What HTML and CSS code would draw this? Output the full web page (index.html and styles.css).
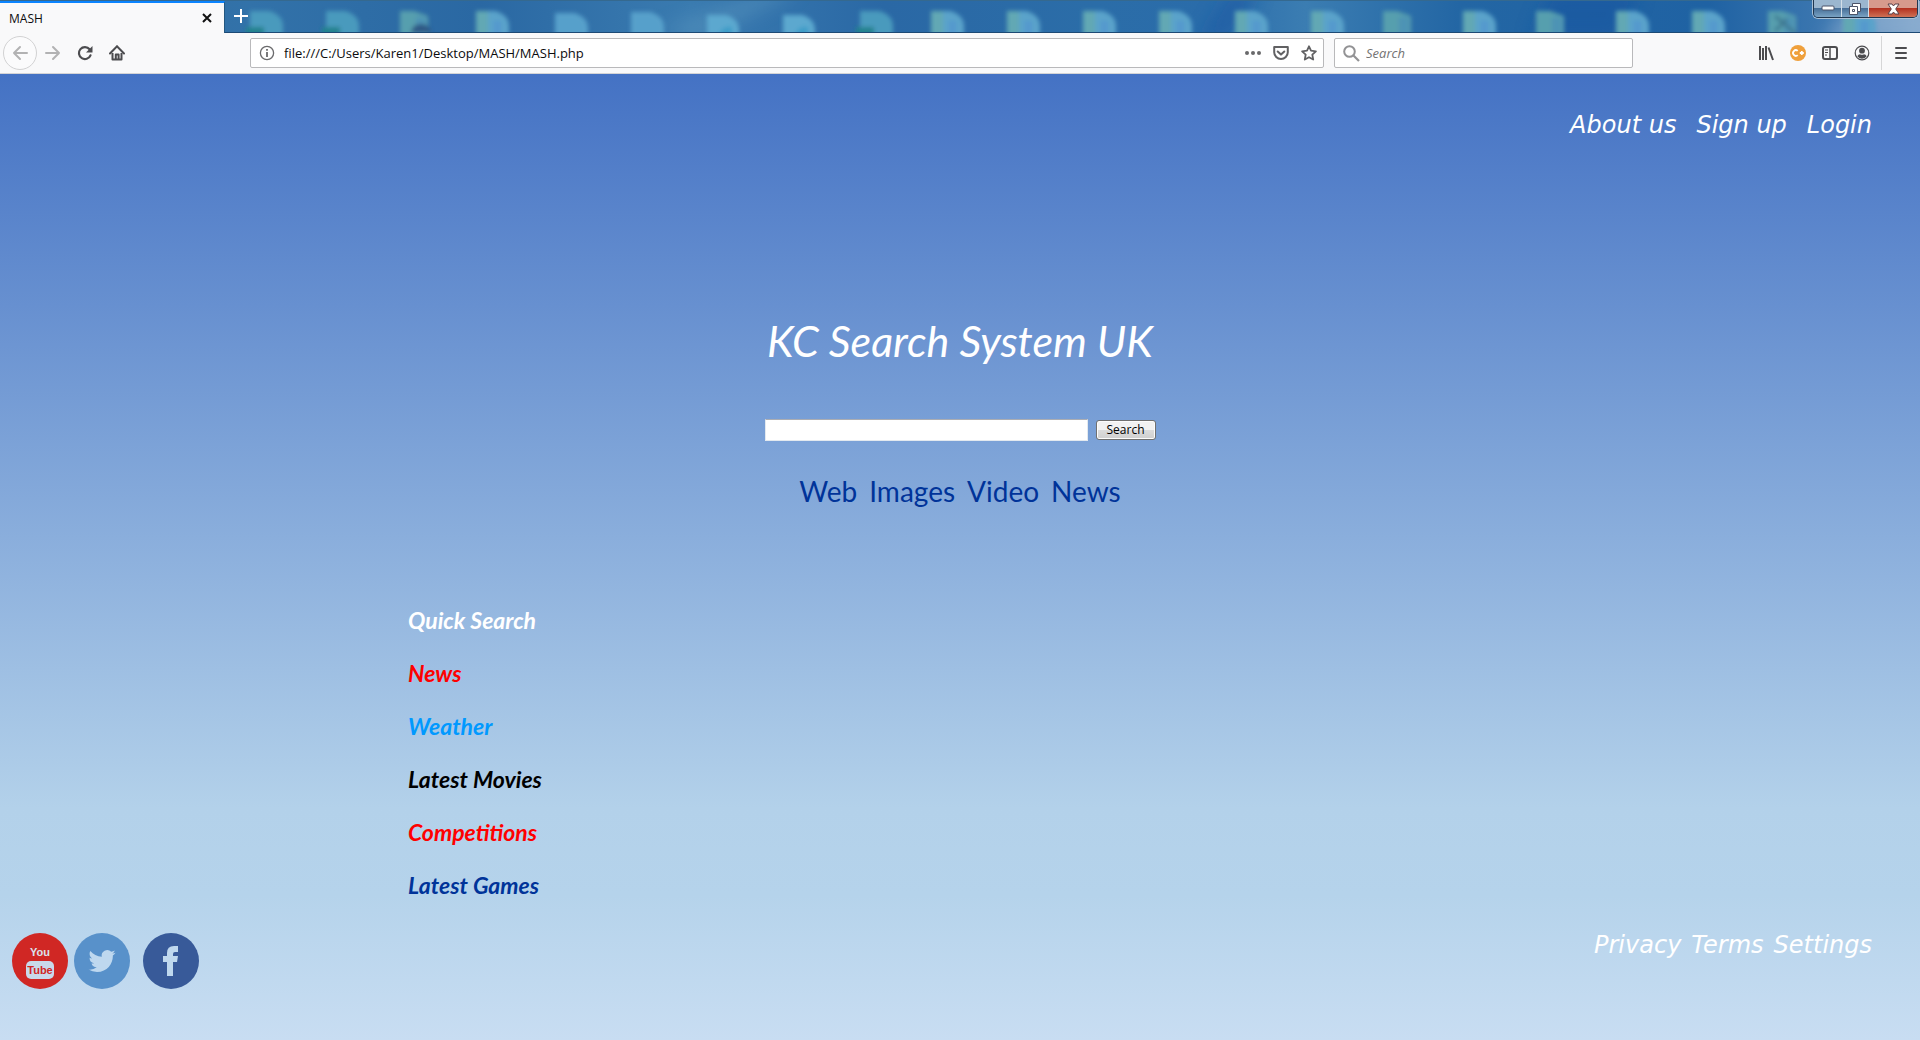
FILE: index.html
```html
<!DOCTYPE html>
<html lang="en">
<head>
<meta charset="utf-8">
<title>MASH</title>
<link rel="stylesheet" href="styles.css">
</head>
<body>
<header class="browser">
  <div class="tabstrip">
    <svg class="desktop" width="1920" height="33" viewBox="0 0 1920 33" preserveAspectRatio="xMinYMin slice" aria-hidden="true">
      <defs>
        <linearGradient id="sky" x1="0" x2="1" y1="0" y2="0">
          <stop offset="0" stop-color="#31699f"/><stop offset=".13" stop-color="#3272a9"/><stop offset=".25" stop-color="#2a68a3"/><stop offset=".36" stop-color="#3a7bb0"/><stop offset=".46" stop-color="#2a68a5"/><stop offset=".57" stop-color="#2b6da8"/><stop offset=".63" stop-color="#2a6caa"/><stop offset=".68" stop-color="#3b7db2"/><stop offset=".76" stop-color="#2366a4"/><stop offset=".89" stop-color="#1f62a3"/><stop offset=".95" stop-color="#3c77b0"/><stop offset="1" stop-color="#7ba2c9"/>
        </linearGradient>
        <filter id="soft" x="-20%" y="-20%" width="140%" height="140%"><feGaussianBlur stdDeviation="2"/></filter>
        <filter id="haze" x="-50%" y="-50%" width="200%" height="200%"><feGaussianBlur stdDeviation="9"/></filter>
        <g id="file"><path d="M0 0h19q14 4 14 15v20H0z" fill="#5aa3ca"/><path d="M0 0h12v35H0z" fill="#62a8b4"/><path d="M18 10h7v24h-7z" fill="#5598ce"/></g>
        <g id="sheet"><path d="M0 0h19q14 4 14 15v20H0z" fill="#57a0cb"/></g>
        <g id="excel"><path d="M0 0h19q14 4 14 15v20H0z" fill="#4a9abd"/><path d="M-4 16h18v18H-4z" fill="#23828e"/></g>
        <g id="folder"><path d="M0 0h14l14 5v30H0z" fill="#579fae"/><path d="M16 6h10v28H16z" fill="#4d93b5"/></g>
        <g id="web"><path d="M0 0h19q13 4 13 15v20H0z" fill="#5ba8cf"/><path d="M10 28q2-18 15-16v18z" fill="#3c9cc8"/></g>
      </defs>
      <rect width="1920" height="33" fill="url(#sky)"/>
      <g filter="url(#haze)" opacity=".5"><path d="M660 30L770-10h30L700 40z" fill="#5b98c0"/><path d="M1200 40l30-50h30l-30 50z" fill="#1552a0"/><path d="M1530 40l20-50h90l-20 50z" fill="#1552a0"/><path d="M1820 40L1870-5h60v50z" fill="#9ab7d6"/></g>
      <g filter="url(#soft)">
        <use href="#excel" x="250" y="11"/><use href="#excel" x="326" y="11"/>
        <use href="#folder" x="400" y="11"/><path d="M411 33q1-9 10-9t10 9z" fill="#2f5885"/>
        <use href="#file" x="476" y="11"/><use href="#sheet" x="555" y="13"/><use href="#sheet" x="631" y="12"/>
        <use href="#web" x="707" y="15"/><use href="#web" x="783" y="15"/><use href="#excel" x="860" y="11"/>
        <use href="#file" x="931" y="11"/><use href="#file" x="1007" y="11"/><use href="#file" x="1083" y="11"/><use href="#file" x="1159" y="11"/><use href="#file" x="1235" y="11"/><use href="#file" x="1311" y="11"/>
        <use href="#folder" x="1383" y="11"/><use href="#file" x="1463" y="11"/><use href="#folder" x="1536" y="11"/><use href="#file" x="1616" y="11"/><use href="#file" x="1692" y="11"/><use href="#folder" x="1768" y="11"/><path d="M1775 16l20 17M1775 31l12-12" stroke="#3d7690" stroke-width="3"/><use href="#file" x="1843" y="11"/>
      </g>
      <path d="M0 .5h1920" stroke="#35698f"/><path d="M0 32.5h1920" stroke="#1d4a75"/>
    </svg>
    <div class="tab"><span>MASH</span>
      <button class="plain" aria-label="Close tab"><svg width="10" height="10" viewBox="0 0 10 10"><path d="M1 1l8 8M9 1L1 9" stroke="#111" stroke-width="2"/></svg></button>
    </div>
    <button class="plain newtab" aria-label="New tab"><svg width="14" height="14" viewBox="0 0 14 14"><path d="M7 0v14M0 7h14" stroke="#fff" stroke-width="2"/></svg></button>
    <div class="window-buttons">
      <button class="win" aria-label="Minimize"><svg width="14" height="7" viewBox="0 0 14 7"><rect x="1" y="1" width="12" height="4" rx="1" fill="#fff" stroke="#4b5368"/></svg></button>
      <button class="win win-mid" aria-label="Restore"><svg width="14" height="14" viewBox="0 0 14 14"><path d="M4.500 1.500h8v8h-3v3h-8v-8h3z" fill="#fff" stroke="#4b5368"/><path d="M4.500 4.500h5v5M4.500 7.500h2v2h-2z" fill="none" stroke="#4b5368"/></svg></button>
      <button class="win win-close" aria-label="Close"><svg width="13" height="12" viewBox="0 0 13 12"><path d="M1 1h4l1.500 2L8 1h4L8.700 6l3.300 5H8L6.500 9 5 11H1l3.300-5z" fill="#fff" stroke="#5b4148"/></svg></button>
    </div>
  </div>
  <div class="toolbar">
    <div class="navigation">
      <button class="plain back" aria-label="Back"><svg width="16" height="16" viewBox="0 0 16 16"><path d="M15 8H2M8 2L2 8l6 6" fill="none" stroke="#b2b2b3" stroke-width="2" stroke-linecap="round" stroke-linejoin="round"/></svg></button>
      <button class="plain" aria-label="Forward"><svg width="16" height="16" viewBox="0 0 16 16"><path d="M1 8h13M8 2l6 6-6 6" fill="none" stroke="#b2b2b3" stroke-width="2" stroke-linecap="round" stroke-linejoin="round"/></svg></button>
      <button class="plain" aria-label="Reload"><svg width="16" height="16" viewBox="0 0 16 16"><path d="M12.600 4.300A6 6 0 1 0 13.500 10.300" fill="none" stroke="#4c4c4f" stroke-width="2.200" stroke-linecap="round"/><path d="M15.500 1v6.500H9z" fill="#4c4c4f"/></svg></button>
      <button class="plain" aria-label="Home"><svg width="16" height="16" viewBox="0 0 16 16"><path d="M1 8.500L8 1.300l7 7.200" fill="none" stroke="#4c4c4f" stroke-width="2" stroke-linecap="round"/><path d="M3.500 8v6.500h9V8M6.800 14V9.500h2.800V14" fill="none" stroke="#4c4c4f" stroke-width="2" stroke-linejoin="round"/></svg></button>
    </div>
    <div class="field address">
      <svg width="16" height="16" viewBox="0 0 16 16"><circle cx="8" cy="8" r="6.600" fill="none" stroke="#6a6a6c" stroke-width="1.300"/><path d="M8 7v5M8 4v1.800" stroke="#6a6a6c" stroke-width="1.800"/></svg>
      <input type="text" aria-label="Address" value="file:///C:/Users/Karen1/Desktop/MASH/MASH.php">
      <button class="plain" aria-label="Page actions"><svg width="16" height="16" viewBox="0 0 16 16"><g fill="#69696b"><circle cx="2" cy="8" r="2"/><circle cx="8" cy="8" r="2"/><circle cx="14" cy="8" r="2"/></g></svg></button>
      <button class="plain" aria-label="Save to Pocket"><svg width="16" height="16" viewBox="0 0 16 16"><path d="M1.200 2h13.600v5.200a6.800 6.800 0 0 1-13.600 0z" fill="none" stroke="#616163" stroke-width="2" stroke-linejoin="round"/><path d="M4.700 6.500L8 9.600l3.300-3.100" fill="none" stroke="#616163" stroke-width="2" stroke-linecap="round" stroke-linejoin="round"/></svg></button>
      <button class="plain" aria-label="Bookmark"><svg width="16" height="16" viewBox="0 0 16 16"><path d="M8 1.300l2 4.400 4.900.6-3.600 3.300.9 4.900L8 12.200l-4.200 2.300.9-4.900L1.100 6.300 6 5.700z" fill="none" stroke="#616163" stroke-width="1.800" stroke-linejoin="round"/></svg></button>
    </div>
    <div class="field finder">
      <svg width="17" height="17" viewBox="0 0 17 17"><circle cx="6.500" cy="6.500" r="5.300" fill="none" stroke="#929294" stroke-width="2"/><path d="M10.500 10.500l5.500 5.500" stroke="#929294" stroke-width="2.200"/></svg>
      <input type="search" aria-label="Browser search" placeholder="Search">
    </div>
    <div class="extras">
      <button class="plain" aria-label="Library"><svg width="16" height="16" viewBox="0 0 16 16"><path d="M2 1v14M5 3v12M8 1v14M10.500 2.500L15 15" stroke="#4c4c4f" stroke-width="2"/></svg></button>
      <button class="plain" aria-label="Extension"><svg width="16" height="16" viewBox="0 0 16 16"><circle cx="8" cy="8" r="8" fill="#efa03c"/><path d="M7.700 5.900A2.800 2.800 0 1 0 7.700 10.100M9.800 8h4M11.800 6v4" fill="none" stroke="#fff" stroke-width="1.800"/></svg></button>
      <button class="plain" aria-label="Sidebars"><svg width="16" height="16" viewBox="0 0 16 16"><rect x="1" y="2" width="14" height="12" rx="2" fill="none" stroke="#4c4c4f" stroke-width="2"/><path d="M8 2v12" stroke="#4c4c4f" stroke-width="1.500"/><path d="M3 5h3M3 7.500h3M3 10h2" stroke="#4c4c4f"/></svg></button>
      <button class="plain" aria-label="Account"><svg width="16" height="16" viewBox="0 0 16 16"><circle cx="8" cy="8" r="6.800" fill="none" stroke="#4c4c4f" stroke-width="1.200"/><circle cx="8" cy="5.700" r="2.900" fill="#4c4c4f"/><path d="M3.300 11.300q1-2 2.700-2 2 1 4 0 1.700 0 2.700 2A5.700 5.700 0 0 1 3.300 11.300z" fill="#4c4c4f"/></svg></button>
    </div>
    <button class="plain menu" aria-label="Menu"><svg width="14" height="14" viewBox="0 0 14 14"><path d="M2 2h10M2 7h10M2 12h10" stroke="#4c4c4f" stroke-width="2" stroke-linecap="round"/></svg></button>
  </div>
</header>
<div class="page">
  <nav class="account"><a href="#about">About us</a><a href="#signup">Sign up</a><a href="#login">Login</a></nav>
  <main>
    <h1>KC Search System UK</h1>
    <form class="search">
      <input type="text" aria-label="Search terms">
      <button type="button">Search</button>
    </form>
    <nav class="kinds"><a href="#web">Web</a><a href="#images">Images</a><a href="#video">Video</a><a href="#news">News</a></nav>
    <section class="quick">
      <h2>Quick Search</h2>
      <a class="red" href="#quick-news">News</a>
      <a class="sky" href="#weather">Weather</a>
      <a class="black" href="#movies">Latest Movies</a>
      <a class="red" href="#competitions">Competitions</a>
      <a class="navy" href="#games">Latest Games</a>
    </section>
  </main>
  <footer>
    <div class="social">
      <a href="#youtube" aria-label="YouTube"><svg width="56" height="56" viewBox="0 0 56 56"><circle cx="28" cy="28" r="28" fill="#d02724"/><text x="28" y="23" class="yt" fill="#d9e2ee">You</text><rect x="14" y="28" width="28" height="18" rx="5" fill="#c9d9ea"/><text x="28" y="41" class="yt" fill="#d02724">Tube</text></svg></a>
      <a href="#twitter" aria-label="Twitter"><svg width="56" height="56" viewBox="0 0 56 56"><circle cx="28" cy="28" r="28" fill="#5891ca"/><g transform="translate(14.500 14.500) scale(1.130)" fill="#bed8ef"><path d="M23.950 4.570a10 10 0 0 1-2.820.770 4.960 4.960 0 0 0 2.160-2.720c-.950.550-2 .950-3.130 1.180a4.920 4.920 0 0 0-8.380 4.480C7.690 8.090 4.070 6.130 1.640 3.160a4.900 4.900 0 0 0-.670 2.480c0 1.710.870 3.210 2.190 4.100a4.900 4.900 0 0 1-2.230-.620v.060a4.920 4.920 0 0 0 3.950 4.830 5 5 0 0 1-2.210.080 4.940 4.940 0 0 0 4.600 3.420A9.870 9.870 0 0 1 0 19.540a13.990 13.990 0 0 0 7.550 2.210c9.050 0 14-7.500 14-13.980 0-.210 0-.420-.020-.630a9.940 9.940 0 0 0 2.420-2.570z"/></g></svg></a>
      <a class="facebook" href="#facebook" aria-label="Facebook"><svg width="56" height="56" viewBox="0 0 56 56"><circle cx="28" cy="28" r="28" fill="#385a99"/><path d="M24 43V29h-4v-6h4v-3q0-7 7-7h4v6h-3q-2 0-2 2v2h5l-1 6h-4v14z" fill="#bfd8ee"/></svg></a>
    </div>
    <nav class="legal"><a href="#privacy">Privacy</a><a href="#terms">Terms</a><a href="#settings">Settings</a></nav>
  </footer>
</div>
</body>
</html>
```
FILE: styles.css
```css
* { box-sizing: border-box; }
body { margin: 0; min-height: 100vh; display: flex; flex-direction: column; font-family: "Open Sans", sans-serif; }
a { text-decoration: none; color: inherit; }
svg { display: block; }

.plain { border: 0; padding: 0; margin: 0; background: none; display: flex; align-items: center; justify-content: center; }

.tabstrip { position: relative; display: flex; align-items: flex-start; height: 33px; overflow: hidden; background: #2a68a5; }
.desktop { position: absolute; left: 0; top: 0; width: 100%; height: 33px; }
.tab { position: relative; display: flex; align-items: center; justify-content: space-between; width: 225px; height: 32px; margin-top: 1px; padding: 0 12px 0 9px; border-top: 2px solid #0a84ff; border-right: 1px solid #24577f; background: #f9f9fa; font-size: 12px; color: #0c0c0d; }
.newtab { position: relative; width: 32px; height: 32px; }
.window-buttons { position: relative; display: flex; margin-left: auto; margin-right: 2px; width: 105px; height: 18px; border: 1px solid #20364f; border-top: 0; border-radius: 0 0 5px 5px; overflow: hidden; box-shadow: 0 0 0 1px #a9c0d6; }
.win { display: flex; align-items: center; justify-content: center; width: 28px; height: 17px; padding: 0; border: 0; border-right: 1px solid #d3dfe9; background: linear-gradient(#9bb6cf 0 45%, #476f98 50%, #7aa3c4); }
.win-mid { width: 27px; }
.win-close { flex: 1; border-right: 0; background: linear-gradient(#d79a8c 0 45%, #b43220 50%, #cf7155); }

.toolbar { display: flex; align-items: center; height: 41px; background: #f9f9fa; border-bottom: 1px solid #d4d4d6; }
.navigation { display: flex; align-items: center; gap: 16px; width: 250px; padding-left: 3px; }
.back { width: 34px; height: 34px; border: 1px solid #d2d2d3; border-radius: 50%; background: #fbfbfc; }
.back + .plain { margin-left: -8px; }
.field { display: flex; align-items: center; height: 30px; border: 1px solid #b9b9bb; border-radius: 2px; background: #fff; }
.field input { flex: 1; min-width: 0; border: 0; padding: 0; outline: 0; background: none; font-family: inherit; font-size: 13px; color: #0c0c0d; }
.address { flex: 1; max-width: 1074px; padding: 0 6px 0 8px; gap: 12px; }
.address input { margin-left: -3px; }
.finder { width: 299px; margin-left: 10px; padding-left: 8px; gap: 6px; }
.finder input::placeholder { font-style: italic; color: #737373; opacity: 1; }
.extras { display: flex; gap: 16px; margin-left: auto; padding-right: 11px; }
.menu { width: 39px; height: 34px; border-left: 1px solid #d6d6d7; }

.page { flex: 1; display: flex; flex-direction: column; background: linear-gradient(#4472c4, #b3d1ea 76%, #b5d3eb 85%, #c8ddf2); }
.account, .legal { display: flex; font-family: "DejaVu Sans", Verdana, sans-serif; font-style: italic; font-size: 24px; line-height: 24px; color: #fff; }
.account { justify-content: flex-end; gap: 20px; padding: 39px 48px 0 0; }
main { display: flex; flex-direction: column; align-items: center; padding-top: 180px; font-family: Lato, sans-serif; }
h1 { margin: 0; font-weight: 400; font-style: italic; font-size: 43px; line-height: 48px; color: #fff; }
.search { display: flex; align-items: center; gap: 8px; margin-top: 54px; }
.search input { width: 323px; height: 22px; padding: 0 4px; border: 1px solid #e3e9ef; border-top-color: #abadb3; background: #fff; }
.search button { width: 60px; height: 20px; padding: 0; border: 1px solid #707070; border-radius: 3px; box-shadow: inset 0 0 0 1px #fcfcfc; background: linear-gradient(#f2f2f2 0 48%, #dcdcdc 52%, #cfcfcf); font: 12px/16px "Open Sans", sans-serif; color: #000; }
.kinds { display: flex; gap: 12px; margin-top: 34px; font-size: 28px; line-height: 32px; color: #039; }
.quick { display: flex; flex-direction: column; align-items: flex-start; gap: 29px; width: 100%; max-width: 1104px; margin-top: 101px; font-size: 23px; line-height: 24px; font-weight: 700; font-style: italic; }
h2 { margin: 0; font: inherit; color: #fff; }
.red { color: #f00; }
.sky { color: #09f; }
.black { color: #000; }
.navy { color: #039; }
footer { display: flex; justify-content: space-between; margin-top: auto; padding: 0 48px 51px 12px; }
.legal { gap: 10px; }
.social { display: flex; gap: 6px; }
.facebook { margin-left: 7px; }
.yt { font: 700 11px "Liberation Sans", sans-serif; text-anchor: middle; }
```
